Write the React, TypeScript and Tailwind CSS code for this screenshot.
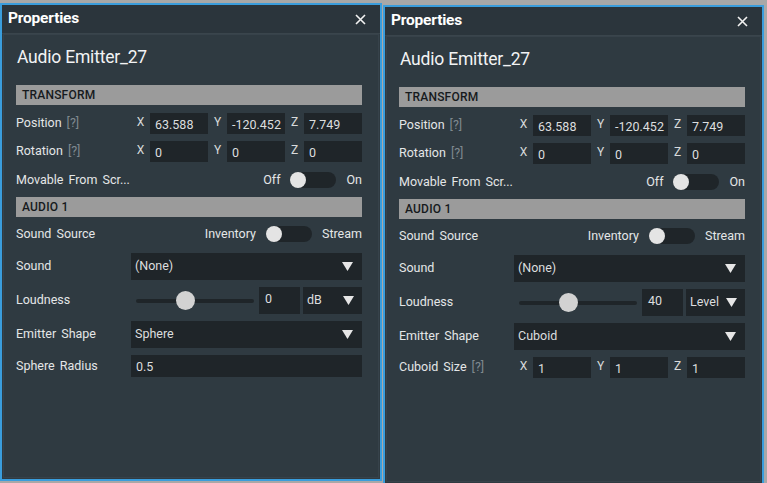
import React from 'react';

const font = { fontFamily: 'Roboto, "Noto Sans", sans-serif' };

const Arrow = () => (
    <svg width="11" height="9" viewBox="0 0 11 9" className="shrink-0">
        <path d="M0 0 H11 L5.5 9 Z" fill="#e6e6e6" />
    </svg>
);

const CloseIcon = () => (
    <svg width="11" height="11" viewBox="0 0 11 11">
        <path d="M1 1 L10 10 M10 1 L1 10" stroke="#f2f2f2" strokeWidth="1.6" />
    </svg>
);

const SectionBar: React.FC<{ title: string }> = ({ title }) => (
    <div className="h-[20px] bg-[#9b9b9b] text-[#161a1d] text-[12px] font-medium flex items-center px-[6px] tracking-[0.2px]">
        {title}
    </div>
);

const Label: React.FC<{ text: string; hint?: boolean }> = ({ text, hint }) => (
    <div className="w-[115px] shrink-0 text-[12.5px] text-[#e4e6e7] [word-spacing:2px] whitespace-nowrap">
        {text}
        {hint && <span className="text-[#7f898f] ml-[5px]">[?]</span>}
    </div>
);

const VectorRow: React.FC<{ label: string; values: string[] }> = ({ label, values }) => (
    <div className="flex h-[21px] items-stretch">
        <div className="flex items-center">
            <Label text={label} hint />
        </div>
        <div className="grid grid-cols-3 flex-1">
            {['X', 'Y', 'Z'].map((axis, i) => (
                <div key={axis} className="flex">
                    <span className="w-[19px] text-center text-[12px] text-[#d8dadb] leading-[19px]">{axis}</span>
                    <div className="flex-1 bg-[#1f2529] text-[12.5px] text-[#dcdedf] pl-[5px] pt-[3px] leading-[18px]">
                        {values[i]}
                    </div>
                </div>
            ))}
        </div>
    </div>
);

const Toggle = () => (
    <div className="w-[46px] h-[16px] rounded-full bg-[#1f2529] flex items-center">
        <div className="w-[16px] h-[16px] rounded-full bg-[#e4e4e4]" />
    </div>
);

const ToggleRow: React.FC<{ label: string; off: string; on: string }> = ({ label, off, on }) => (
    <div className="flex h-[20px] items-center">
        <Label text={label} />
        <div className="flex-1 flex items-center justify-end text-[12.5px] text-[#e4e6e7]">
            <span>{off}</span>
            <span className="ml-[10px] mr-[10px]"><Toggle /></span>
            <span>{on}</span>
        </div>
    </div>
);

const Dropdown: React.FC<{ label: string; value: string }> = ({ label, value }) => (
    <div className="flex h-[27px] items-center">
        <Label text={label} />
        <div className="flex-1 h-full bg-[#1f2529] flex items-center justify-between pl-[4px] pr-[9px] text-[12.5px] text-[#dcdedf]">
            <span>{value}</span>
            <Arrow />
        </div>
    </div>
);

const Loudness: React.FC<{ value: string; unit: string }> = ({ value, unit }) => (
    <div className="flex h-[27px] items-center">
        <Label text="Loudness" />
        <div className="w-[123px] pl-[5px] relative h-full flex items-center">
            <div className="w-full h-[4px] rounded-full bg-[#1f2529]" />
            <div className="absolute left-[45px] top-[4px] w-[19px] h-[19px] rounded-full bg-[#d2d2d2]" />
        </div>
        <div className="w-[41px] h-full ml-[5px] bg-[#1f2529] text-[12.5px] text-[#dcdedf] pl-[6px] pt-[3px]">{value}</div>
        <div className="flex-1 h-full ml-[3px] bg-[#1f2529] flex items-center justify-between pl-[4px] pr-[8px] text-[12.5px] text-[#dcdedf]">
            <span>{unit}</span>
            <Arrow />
        </div>
    </div>
);

const Panel: React.FC<{ second?: boolean }> = ({ second }) => (
    <div
        className={`${second ? 'w-[381px] mt-[5px] h-[480px] ml-[1px]' : 'w-[382px] mt-[3px] h-[478px]'} shrink-0 border-2 border-[#3a9ddc] bg-[#2f3a41] flex flex-col`}
    >
        <div className="h-[29px] shrink-0 bg-[#2b353c] border-b border-[#3a454c] flex items-center justify-between pl-[6px] pr-[14px]">
            <span className="text-[15.5px] font-bold text-white tracking-[-0.2px]">Properties</span>
            <CloseIcon />
        </div>
        <div className="flex-1 mx-[1px] mb-[1px] border border-[#37424a] pl-[12px]">
            <div className="w-[346px]">
                <div className="pt-[12px] h-[20px] box-content text-[17.5px] leading-[20px] text-[#f2f3f4] pl-[1px] tracking-[-0.2px] mb-[18px]">
                    Audio Emitter_27
                </div>
                <SectionBar title="TRANSFORM" />
                <div className="mt-[8px]">
                    <VectorRow label="Position" values={['63.588', '-120.452', '7.749']} />
                </div>
                <div className="mt-[7px]">
                    <VectorRow label="Rotation" values={['0', '0', '0']} />
                </div>
                <div className="mt-[8px]">
                    <ToggleRow label="Movable From Scr..." off="Off" on="On" />
                </div>
                <div className="mt-[7px]">
                    <SectionBar title="AUDIO 1" />
                </div>
                <div className="mt-[7px]">
                    <ToggleRow label="Sound Source" off="Inventory" on="Stream" />
                </div>
                <div className="mt-[9px]">
                    <Dropdown label="Sound" value="(None)" />
                </div>
                <div className="mt-[7px]">
                    {second ? <Loudness value="40" unit="Level" /> : <Loudness value="0" unit="dB" />}
                </div>
                <div className="mt-[7px]">
                    <Dropdown label="Emitter Shape" value={second ? 'Cuboid' : 'Sphere'} />
                </div>
                <div className="mt-[7px]">
                    {second ? (
                        <VectorRow label="Cuboid Size" values={['1', '1', '1']} />
                    ) : (
                        <div className="flex h-[22px] items-center">
                            <Label text="Sphere Radius" />
                            <div className="flex-1 h-full bg-[#1f2529] text-[12.5px] text-[#dcdedf] pl-[5px] pt-[3px]">0.5</div>
                        </div>
                    )}
                </div>
            </div>
        </div>
    </div>
);

const App: React.FC = () => {
    return (
        <div style={font} className="w-[767px] h-[483px] overflow-hidden bg-[#a8a8a8] flex items-start">
            <Panel />
            <Panel second />
        </div>
    );
};

export default App;
